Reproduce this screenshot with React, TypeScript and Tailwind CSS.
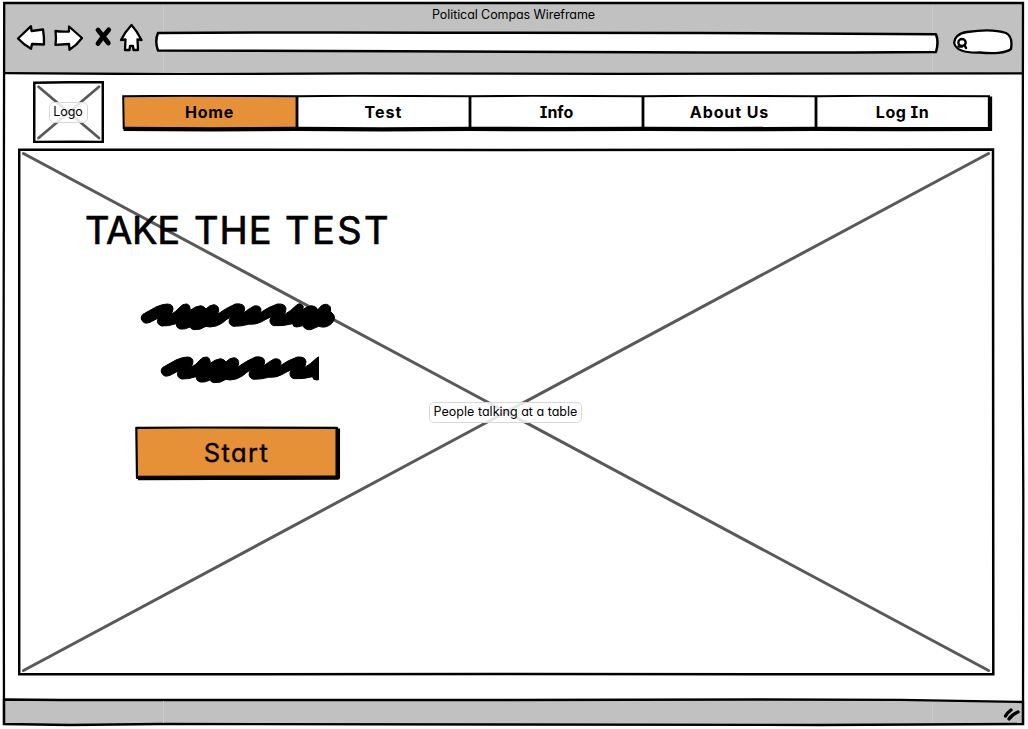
import type { ReactNode } from "react";

const sketchFont =
  "font-['Inter','Liberation_Sans',sans-serif] [font-feature-settings:'cv11','cv08','ss03'] [stroke-linejoin:round]";

function BrowserButtons() {
  return (
    <svg className="block h-[34px] w-[130px] shrink-0" viewBox="16 21 130 34" fill="#fff" stroke="#000" strokeWidth="2.3" strokeLinejoin="round" strokeLinecap="round">
      <path d="M18 38.5 L31 26.2 L31.5 31 L43 29.500 Q44.300 37 44 44.500 L32 44 L31 48.800 Q23 44 18 38.500Z" />
      <path d="M82 38 L69 26.500 L69 31.500 Q61 32 55.500 31 Q56.500 38 55.500 44.800 L69 44 L69.500 49.800 Q77 45 82 38Z" />
      <path d="M98 30 Q103 36 108.300 43 M108.700 29.800 Q103 36 98 43.500" fill="none" strokeWidth="4.800" />
      <path d="M131.500 25 Q125 32 121 40 L125.500 39.500 L125 50 L129.500 50 L130 46 L133 46 L133.500 50 L138 50 L137.500 39.500 L141.500 40 Q137 31 131.500 25Z" />
    </svg>
  );
}

function AddressBar() {
  return (
    <svg className="block h-[26px] w-[786px] shrink-0" viewBox="154 29 786 26" fill="#fff" stroke="#000" strokeWidth="2.5" strokeLinejoin="round">
      <path d="M158 33 Q300 32 470 32.700 T700 33 L936 34.200 Q939 42 936 52 Q800 53 640 52.300 T400 51.200 L158 50.500 Q154.500 41 158 33Z" />
    </svg>
  );
}

function SearchBox() {
  return (
    <svg className="block h-[28px] w-[64px] shrink-0" viewBox="951 28 64 28" fill="none" stroke="#000" strokeWidth="2.3" strokeLinecap="round">
      <path fill="#fff" d="M967 32 C981 30 997 30 1006 33 C1012 36 1012 43 1011 49 C1006 53 993 54 980 52.500 C968 53 957 52 954.500 44 C953 38 959 33 967 32Z" />
      <ellipse cx="962" cy="42.500" rx="3.700" ry="3.500" />
      <path d="M958.500 46.500 L962 46.500 M964.500 45 L966 48" strokeWidth="2.500" />
    </svg>
  );
}

function Header() {
  return (
    <header className="relative h-[75px] w-full shrink-0">
      <svg className="absolute inset-0 h-full w-full" viewBox="0 0 1028 75">
        <path fill="#c1c1c1" d="M4 3H1023V73.500L640 73.500L200 74.500L4 73.200Z" />
        <path d="M163.500 3.500V73M932.500 3.500V73" stroke="#cacaca" strokeWidth="1" />
        <path fill="none" stroke="#000" strokeWidth="2.300" d="M4 73.200L180 74.200L360 73.300L620 73.800L1023 73.300" />
      </svg>
      <div className="relative flex h-full flex-col">
        <div className={`${sketchFont} flex h-[29px] shrink-0 items-center justify-center pt-[2px] pr-[1px] text-[12.5px] leading-none tracking-[-0.08px]`}>
          Political Compas Wireframe
        </div>
        <div className="-mt-[8px] flex items-start pl-[16px]">
          <BrowserButtons />
          <div className="mt-[8px] ml-[8px]"><AddressBar /></div>
          <div className="mt-[7px] ml-[11px]"><SearchBox /></div>
        </div>
      </div>
    </header>
  );
}

function Caption({ children, className }: { children: ReactNode; className: string }) {
  return (
    <span className={`${sketchFont} relative flex items-center justify-center rounded-[5px] border border-[#d8d8d8] bg-white/85 leading-none whitespace-nowrap ${className}`}>
      {children}
    </span>
  );
}

function Logo() {
  return (
    <div className="relative flex h-[62px] w-[71px] shrink-0 items-center justify-center">
      <svg className="absolute inset-0 h-full w-full" viewBox="0 0 71 62">
        <path d="M1.300 1.700L35 1.300L69.800 1.300V61L40 60.700L1.200 61Z" fill="#fff" stroke="#000" strokeWidth="2.500" />
        <path d="M5.500 5.800L66 57M66 5.800L5.500 57" stroke="#595959" strokeWidth="2.800" strokeLinecap="round" />
      </svg>
      <Caption className="-ml-[1px] h-[21px] w-[39px] text-[12.5px] tracking-[-0.1px]">Logo</Caption>
    </div>
  );
}

const tabs = [
  { label: "Home", className: "w-[173px] pr-[2px] tracking-[0.8px]" },
  { label: "Test", className: "w-[173px] tracking-[1px]" },
  { label: "Info", className: "w-[173px] tracking-[0px]" },
  { label: "About Us", className: "w-[173px] tracking-[0.9px]" },
  { label: "Log In", className: "w-[172px] pl-[1px] tracking-[0.5px]" },
];

function Nav() {
  return (
    <nav className="relative flex h-[37px] w-[871px] shrink-0">
      <svg className="absolute inset-0 h-full w-full" viewBox="0 0 871 37" fill="none" stroke="#000">
        <path fill="#e69138" stroke="none" d="M1.500 1L175 1V33L1.500 33Z" />
        <path strokeWidth="2" d="M1.700 34L1.200 1.200L60 0.800L175 1.200L230 0.800L348 1.200L410 0.800L521 1.200L580 0.800L694 1.200L750 0.800L867 1.200V32" />
        <path strokeWidth="2.800" d="M175 1L175 33.500M348 1L348 33.500M521 1L521 33.500M694 1L694 33.500" />
        <path strokeWidth="4.300" d="M1.500 33.800L90 34.300L175 33.800L260 34.300L348 33.800L430 34.200L521 33.800L600 34.200L694 33.800L780 34.200L868 33.800V1.500" />
      </svg>
      <div className="relative flex h-[33px] w-[867px] items-stretch pl-[2px]">
        {tabs.map((t) => (
          <a key={t.label} className={`${sketchFont} ${t.className} flex items-center justify-center text-[16px] leading-none font-bold`}>
            {t.label}
          </a>
        ))}
      </div>
    </nav>
  );
}

const scribble =
  "M34 72Q32 60 44 55L78 36Q98 27 112 27Q130 28 129 43Q126 54 124 58Q138 50 150 36Q158 26 170 27Q180 28 181 46Q195 34 212 32Q222 33 228 42Q238 30 252 29Q268 32 266 48Q264 54 262 58Q290 38 316 27Q342 24 344 40Q344 48 340 55Q352 44 372 33Q388 30 393 42Q392 50 391 53Q415 36 442 27Q465 25 468 40Q467 52 463 59Q482 48 498 32Q510 20 520 34L518 44Q530 34 545 32Q560 34 563 44Q570 38 574 32Q592 22 601 36L602 50Q614 58 614 70Q608 90 585 96Q575 97 566 94Q552 100 542 104Q526 106 518 92L500 96Q488 96 488 86Q460 94 432 92Q418 88 420 74Q422 69 425 65Q412 70 395 80Q380 89 356 88Q335 94 310 94Q294 88 298 74Q299 70 302 66Q290 72 278 83Q262 95 240 96L228 94Q210 106 192 104Q182 102 180 96Q166 104 150 102Q138 98 138 86Q115 94 95 93Q80 88 83 74Q84 70 87 68Q75 74 60 82Q40 90 34 72Z";

function Scribble({ width, viewBox, className }: { width: number; viewBox: string; className: string }) {
  return (
    <svg className={`block shrink-0 overflow-hidden ${className}`} width={width} height={28} viewBox={viewBox}>
      <path d={scribble} fill="#000" stroke="#000" strokeWidth="3" strokeLinejoin="round" />
    </svg>
  );
}

function StartButton() {
  return (
    <button className={`${sketchFont} relative mt-[42px] ml-[117px] flex h-[55px] w-[206px] shrink-0 items-center justify-center text-[25.5px] leading-none tracking-[1.4px] [-webkit-text-stroke:0.4px_#000]`}>
      <svg className="absolute inset-0 h-full w-full" viewBox="0 0 206 55" fill="none" stroke="#000">
        <path fill="#e69138" strokeWidth="2.200" d="M1.300 1.800L60 1.500L202 1.800V51L2 52Z" />
        <path strokeWidth="4.500" d="M3 52L80 51.800L202.800 51.500V2.500" />
      </svg>
      <span className="relative -mt-[2px] -ml-[3px]">Start</span>
    </button>
  );
}

function Hero() {
  return (
    <main className="relative mt-[4px] ml-[18px] h-[528px] w-[977px] shrink-0">
      <svg className="absolute inset-0 h-full w-full" viewBox="18 148 977 528">
        <path d="M19.200 149.700L500 150L993 149.400L993.300 674.300L500 674L19.200 674.300Z" fill="none" stroke="#000" strokeWidth="2.500" />
        <path d="M23.500 153.500L988.500 670.500M988.500 153.500L23.500 670.500" stroke="#595959" strokeWidth="3" strokeLinecap="round" />
      </svg>
      <div className="relative flex h-full flex-col">
        <h1 className={`${sketchFont} mt-[60px] ml-[67px] flex h-[44px] text-[38px] leading-[44px] whitespace-pre [-webkit-text-stroke:0.7px_#000]`}>
          <span className="w-[109px] tracking-[-0.3px]">TAKE </span>
          <span className="w-[91px] tracking-[1px]">THE </span>
          <span className="tracking-[2.4px]">TEST</span>
        </h1>
        <Scribble width={197} viewBox="30 24 591 84" className="mt-[51px] ml-[122px]" />
        <Scribble width={159} viewBox="30 24 477 84" className="mt-[25px] ml-[142px]" />
        <StartButton />
      </div>
      <div className="absolute top-[254px] left-[411px]">
        <Caption className="h-[21px] w-[153px] text-[12.5px] tracking-[0.02px]">People talking at a table</Caption>
      </div>
    </main>
  );
}

function Footer() {
  return (
    <footer className="mt-auto h-[32px] w-full shrink-0">
      <svg className="block h-full w-full" viewBox="0 697 1028 32">
        <path fill="#c1c1c1" stroke="#000" strokeWidth="2.300" d="M4 699.500L60 700L500 700L760 699.500L900 699.800L1023 702V724L820 725L500 724.500L160 724L70 725L4 724Z" />
        <path d="M163.500 701V723M932.500 702V723" stroke="#cacaca" />
        <path d="M1005.500 716Q1007 713 1011 710M1009 719Q1012 714.500 1018 712" fill="none" stroke="#000" strokeWidth="3.300" strokeLinecap="round" />
      </svg>
    </footer>
  );
}

export default function App() {
  return (
    <div className="relative flex h-[729px] w-[1028px] flex-col overflow-hidden bg-white text-black">
      <Header />
      <div className="mt-[6px] flex h-[63px] shrink-0 items-start pl-[33px]">
        <Logo />
        <div className="mt-[14px] ml-[18px]"><Nav /></div>
      </div>
      <Hero />
      <Footer />
      <svg className="pointer-events-none absolute inset-0 h-full w-full" viewBox="0 0 1028 729" fill="none" stroke="#000" strokeWidth="2.300">
        <path d="M4 725L3.500 400L4.200 3L500 3L1023 3L1022.500 300L1023.300 500L1023 725" />
      </svg>
    </div>
  );
}
